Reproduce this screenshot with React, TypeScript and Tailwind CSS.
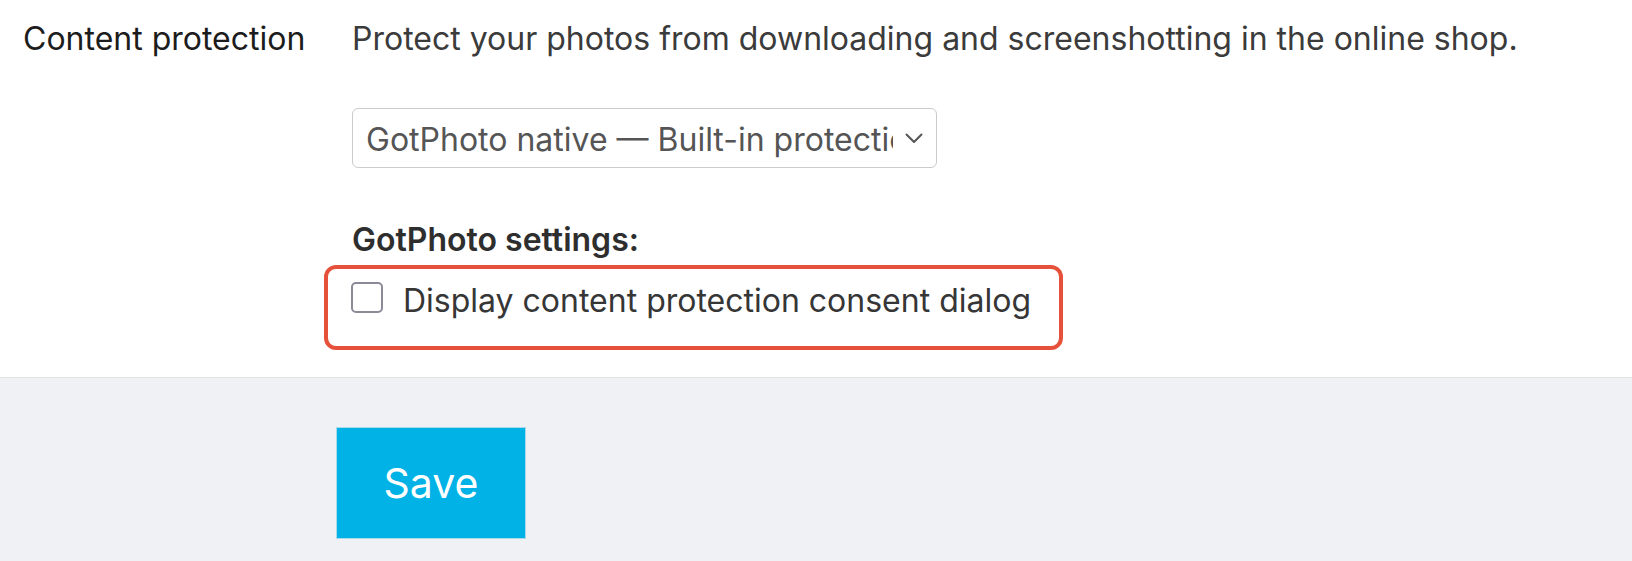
const font = { fontFamily: "Inter, 'Noto Sans', sans-serif" };

const ContentProtectionSettings = () => {
  return (
    <div className="w-[1632px] h-[561px] bg-[#f0f1f4] flex flex-col overflow-hidden" style={font}>
      {/* Settings row */}
      <section className="bg-white flex pl-[23px] pt-[15px] pb-[27px] border-b border-[#e1e2e4]">
        <div className="w-[329px] shrink-0 text-[32px] leading-[48px] text-[#1c1c1c]">
          Content protection
        </div>

        <div className="flex flex-col">
          <p className="text-[32px] leading-[48px] text-[#3b3b3b]">
            Protect your photos from downloading and screenshotting in the online shop.
          </p>

          {/* Protection provider select */}
          <div className="mt-[45px] w-[585px] h-[60px] flex items-center border border-[#cbcbcb] rounded-[6px] bg-white pl-[13px] pr-[13px]">
            <span className="w-[527px] overflow-hidden whitespace-nowrap text-[32px] leading-[40px] pt-[3px] text-[#555555]">
              GotPhoto native — Built-in protection
            </span>
            <svg width="18" height="11" viewBox="0 0 18 11" className="ml-auto text-[#555555]" aria-hidden="true">
              <polyline points="1.5,1.5 9,9 16.5,1.5" fill="none" stroke="currentColor" strokeWidth="2" strokeLinecap="round" strokeLinejoin="round" />
            </svg>
          </div>

          <h3 className="mt-[48px] text-[32px] leading-[48px] font-semibold text-[#2e2e2e]">
            GotPhoto settings:
          </h3>

          {/* Highlighted option */}
          <label className="mt-[1px] -ml-[28px] w-[739px] h-[85px] border-4 border-[#e5513b] rounded-[12px] pl-[23px] pt-[13px] flex items-start gap-[20px] cursor-pointer">
            <span className="w-[32px] h-[31px] shrink-0 border-2 border-[#8a8a98] rounded-[5px] bg-white" />
            <span className="text-[32px] leading-[38px] text-[#363636]">
              Display content protection consent dialog
            </span>
          </label>
        </div>
      </section>

      {/* Footer actions */}
      <footer className="pl-[336px] pt-[49px]">
        <button className="w-[190px] h-[112px] bg-[#00b2e6] border border-[#a9d9ea] text-white text-[41px] leading-none">
          Save
        </button>
      </footer>
    </div>
  );
};

export default function App() {
  return <ContentProtectionSettings />;
}
